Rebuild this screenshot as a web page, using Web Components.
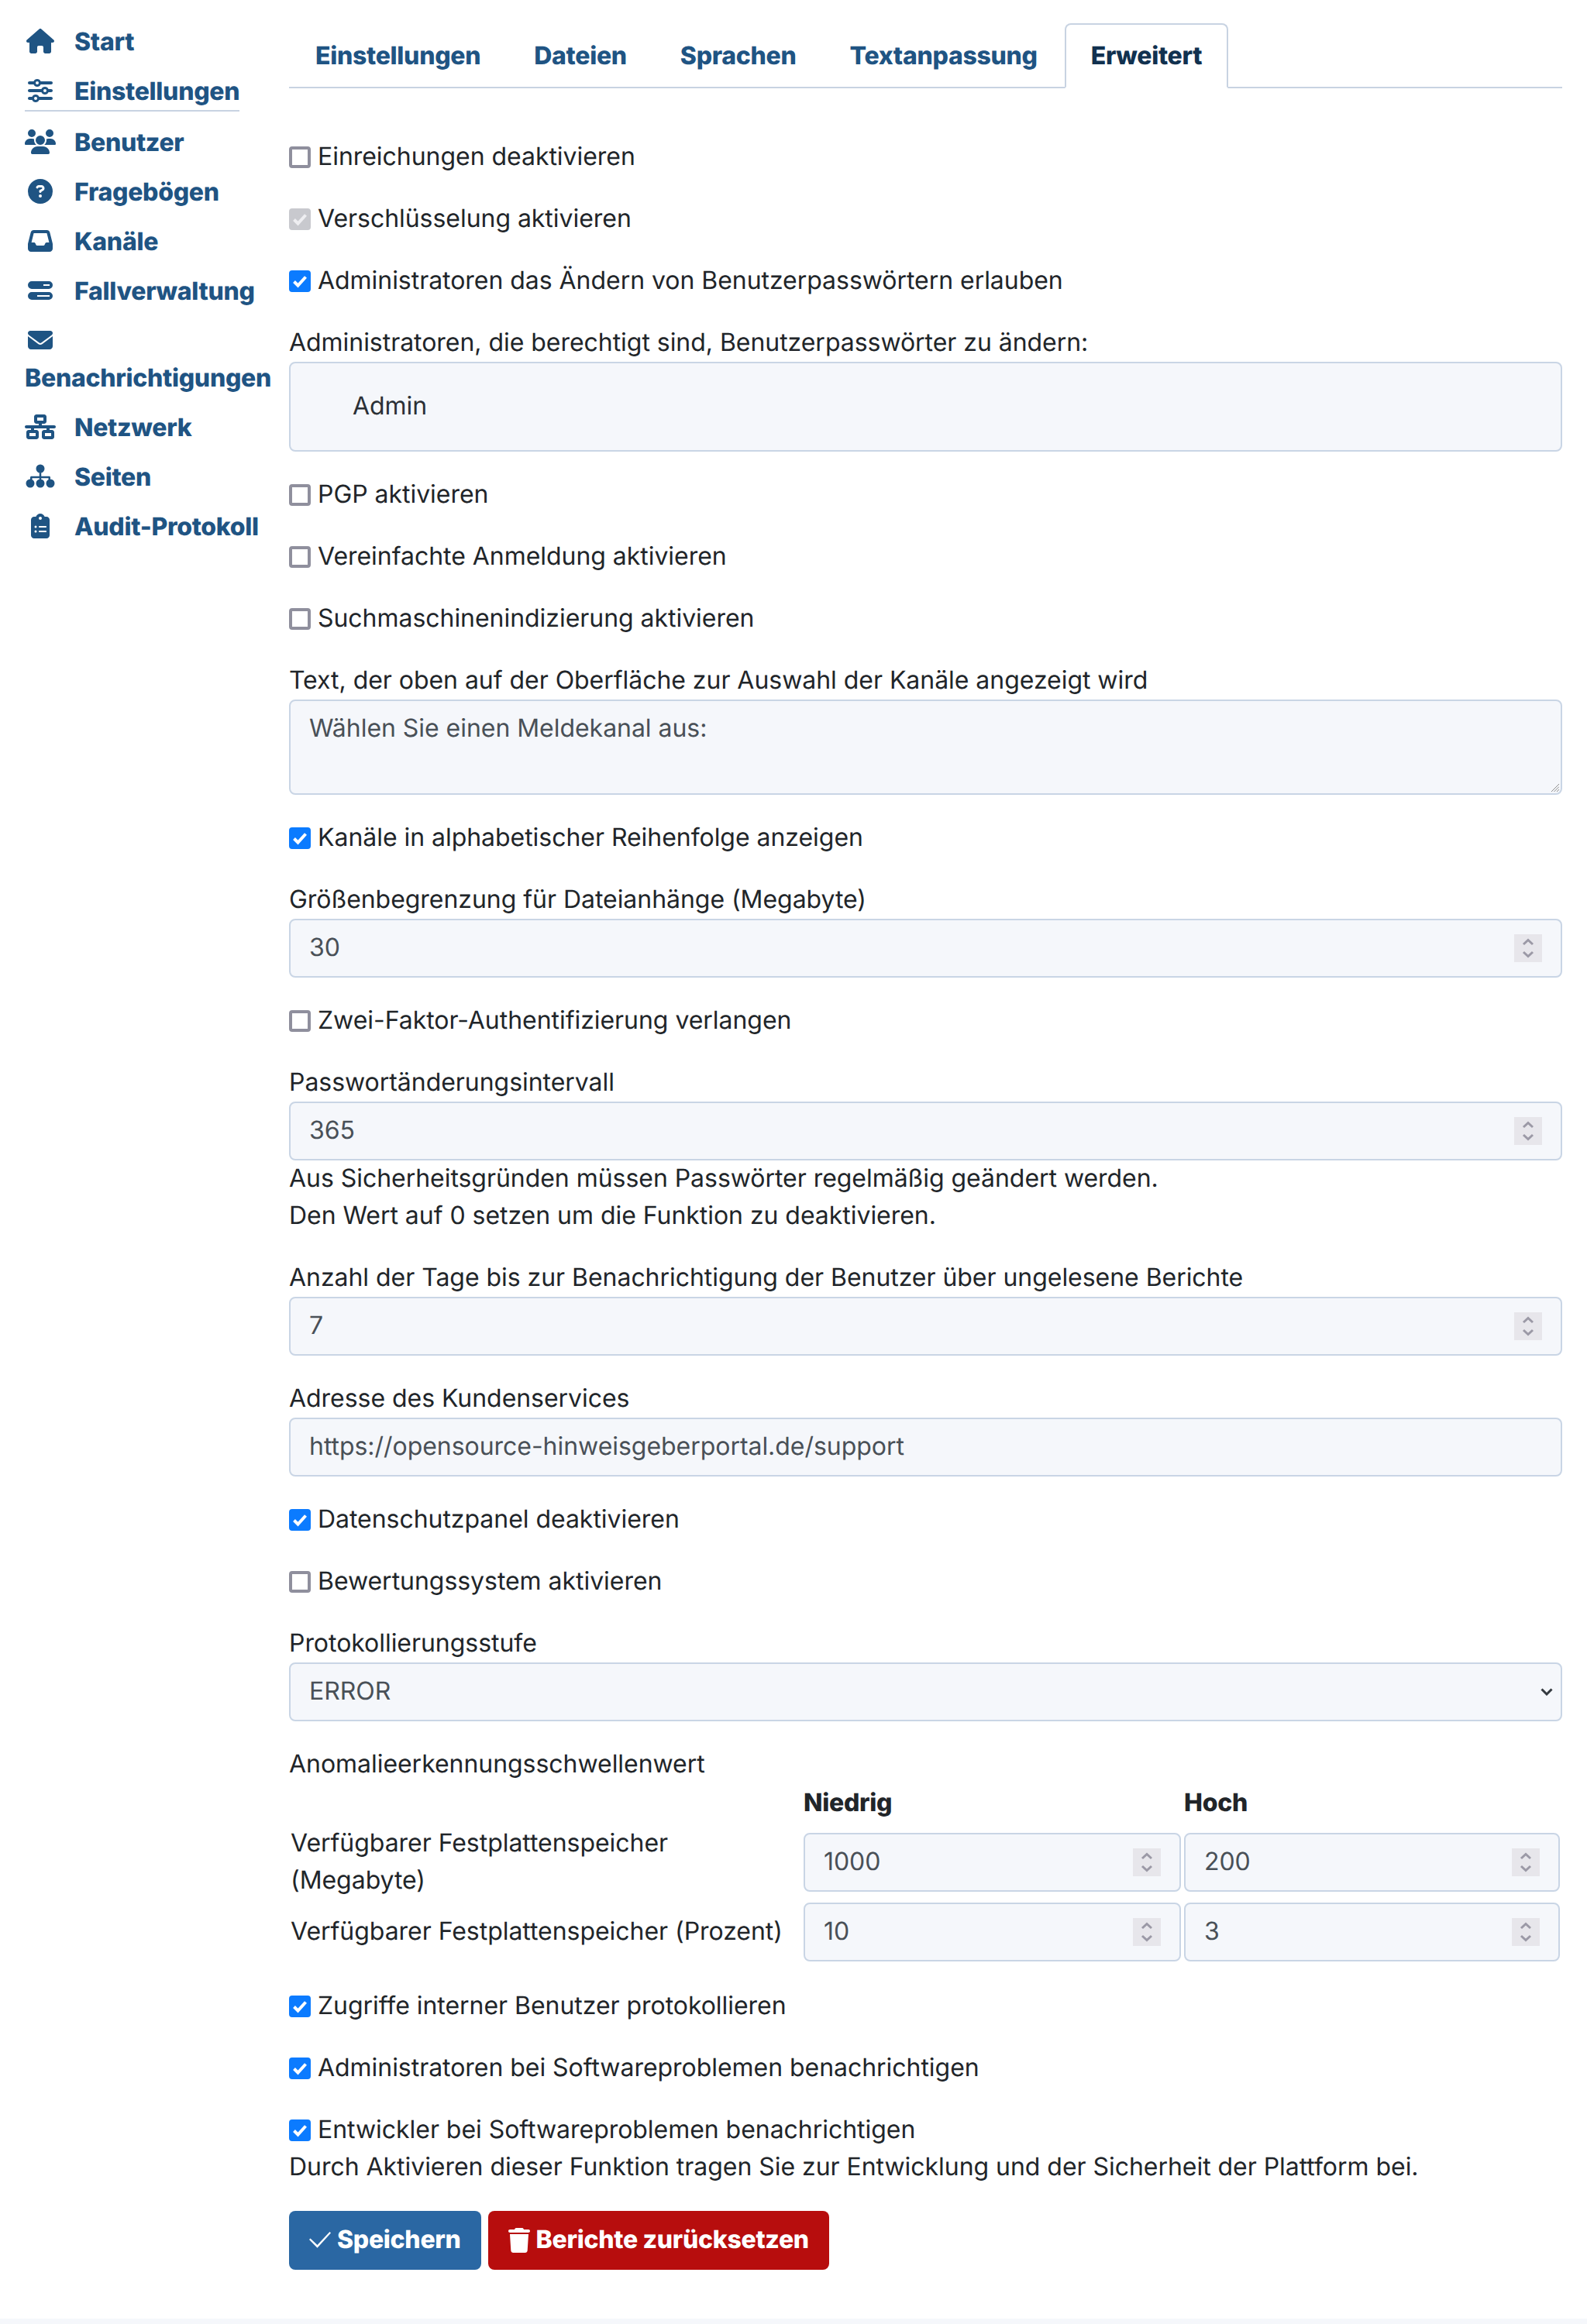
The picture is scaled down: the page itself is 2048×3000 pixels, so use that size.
<!DOCTYPE html>
<html lang="de">
<head>
<meta charset="utf-8">
<title>Erweitert</title>
<style>
  html, body { margin: 0; padding: 0; background: #fff; }
  body { font-family: Inter, "Liberation Sans", sans-serif; font-size: 32px; line-height: 48px; color: #212529; text-rendering: geometricPrecision; letter-spacing: -0.04px; }
</style>
</head>
<body>

<admin-page>
  <side-nav slot="nav">
    <nav-item icon="house">Start</nav-item>
    <nav-item icon="sliders" active>Einstellungen</nav-item>
    <nav-item icon="users">Benutzer</nav-item>
    <nav-item icon="question">Fragebögen</nav-item>
    <nav-item icon="inbox">Kanäle</nav-item>
    <nav-item icon="server">Fallverwaltung</nav-item>
    <nav-item icon="envelope">Benachrichtigungen</nav-item>
    <nav-item icon="network">Netzwerk</nav-item>
    <nav-item icon="sitemap">Seiten</nav-item>
    <nav-item icon="clipboard">Audit-Protokoll</nav-item>
  </side-nav>

  <tab-bar>
    <tab-item>Einstellungen</tab-item>
    <tab-item>Dateien</tab-item>
    <tab-item>Sprachen</tab-item>
    <tab-item>Textanpassung</tab-item>
    <tab-item active>Erweitert</tab-item>
  </tab-bar>

  <settings-form>
    <check-row>Einreichungen deaktivieren</check-row>
    <check-row checked disabled>Verschlüsselung aktivieren</check-row>
    <check-row checked>Administratoren das Ändern von Benutzerpasswörtern erlauben</check-row>

    <setting-field label="Administratoren, die berechtigt sind, Benutzerpasswörter zu ändern:">
      <input-box kind="multi">Admin</input-box>
    </setting-field>

    <check-row>PGP aktivieren</check-row>
    <check-row>Vereinfachte Anmeldung aktivieren</check-row>
    <check-row>Suchmaschinenindizierung aktivieren</check-row>

    <setting-field label="Text, der oben auf der Oberfläche zur Auswahl der Kanäle angezeigt wird">
      <input-box kind="textarea">Wählen Sie einen Meldekanal aus:</input-box>
    </setting-field>

    <check-row checked>Kanäle in alphabetischer Reihenfolge anzeigen</check-row>

    <setting-field label="Größenbegrenzung für Dateianhänge (Megabyte)">
      <input-box kind="number">30</input-box>
    </setting-field>

    <check-row>Zwei-Faktor-Authentifizierung verlangen</check-row>

    <setting-field label="Passwortänderungsintervall">
      <input-box kind="number">365</input-box>
      <div slot="help">Aus Sicherheitsgründen müssen Passwörter regelmäßig geändert werden.</div>
      <div slot="help">Den Wert auf 0 setzen um die Funktion zu deaktivieren.</div>
    </setting-field>

    <setting-field label="Anzahl der Tage bis zur Benachrichtigung der Benutzer über ungelesene Berichte">
      <input-box kind="number">7</input-box>
    </setting-field>

    <setting-field label="Adresse des Kundenservices">
      <input-box>https://opensource-hinweisgeberportal.de/support</input-box>
    </setting-field>

    <check-row checked>Datenschutzpanel deaktivieren</check-row>
    <check-row>Bewertungssystem aktivieren</check-row>

    <setting-field label="Protokollierungsstufe">
      <input-box kind="select">ERROR</input-box>
    </setting-field>

    <threshold-table>
      <span slot="title">Anomalieerkennungsschwellenwert</span>
      <span slot="low">Niedrig</span>
      <span slot="high">Hoch</span>
      <span slot="row1">Verfügbarer Festplattenspeicher (Megabyte)</span>
      <input-box slot="row1-low" kind="number">1000</input-box>
      <input-box slot="row1-high" kind="number">200</input-box>
      <span slot="row2">Verfügbarer Festplattenspeicher (Prozent)</span>
      <input-box slot="row2-low" kind="number">10</input-box>
      <input-box slot="row2-high" kind="number">3</input-box>
    </threshold-table>

    <check-row checked>Zugriffe interner Benutzer protokollieren</check-row>
    <check-row checked>Administratoren bei Softwareproblemen benachrichtigen</check-row>
    <check-row checked>
      Entwickler bei Softwareproblemen benachrichtigen
      <div slot="help">Durch Aktivieren dieser Funktion tragen Sie zur Entwicklung und der Sicherheit der Plattform bei.</div>
    </check-row>

    <button-row>
      <action-button icon="check">Speichern</action-button>
      <action-button icon="trash" danger>Berichte zurücksetzen</action-button>
    </button-row>
  </settings-form>

  <page-footer slot="footer"></page-footer>
</admin-page>

<script>
// Icon shapes, viewBox then path
const ICONS = {
  house: ['0 0 576 512', 'M575.8 255.5c0 18-15 32.1-32 32.1h-32l.7 160.2c0 2.7-.2 5.4-.5 8.1V472c0 22.1-17.9 40-40 40H456c-1.1 0-2.2 0-3.3-.1c-1.4 .1-2.8 .1-4.2 .1H416 392c-22.1 0-40-17.9-40-40V448 384c0-17.7-14.3-32-32-32H256c-17.7 0-32 14.3-32 32v64 24c0 22.1-17.9 40-40 40H160 128.1c-1.5 0-3-.1-4.5-.2c-1.2 .1-2.4 .2-3.6 .2H104c-22.1 0-40-17.9-40-40V360c0-.9 0-1.9 .1-2.8V287.6H32c-18 0-32-14-32-32.1c0-9 3-17 10-24L266.4 8c7-7 15-8 22-8s15 2 21 7L564.8 231.5c8 7 12 15 11 24z'],
  sliders: ['0 0 512 512', 'M0 416c0 17.7 14.3 32 32 32l54.7 0c12.3 28.3 40.5 48 73.3 48s61-19.7 73.3-48L480 448c17.7 0 32-14.3 32-32s-14.3-32-32-32l-246.7 0c-12.3-28.3-40.5-48-73.3-48s-61 19.7-73.3 48L32 384c-17.7 0-32 14.3-32 32zm128 0a32 32 0 1 1 64 0 32 32 0 1 1 -64 0zM320 256a32 32 0 1 1 64 0 32 32 0 1 1 -64 0zm32-80c-32.8 0-61 19.7-73.3 48L32 224c-17.7 0-32 14.3-32 32s14.3 32 32 32l246.7 0c12.3 28.3 40.5 48 73.3 48s61-19.7 73.3-48l54.7 0c17.7 0 32-14.3 32-32s-14.3-32-32-32l-54.7 0c-12.3-28.3-40.5-48-73.3-48zM192 128a32 32 0 1 1 0-64 32 32 0 1 1 0 64zm73.3-64C253 35.7 224.8 16 192 16s-61 19.7-73.3 48L32 64C14.3 64 0 78.3 0 96s14.3 32 32 32l86.7 0c12.3 28.3 40.5 48 73.3 48s61-19.7 73.3-48L480 128c17.7 0 32-14.3 32-32s-14.3-32-32-32L265.3 64z'],
  users: ['0 0 640 512', 'M144 0a80 80 0 1 1 0 160A80 80 0 1 1 144 0zM512 0a80 80 0 1 1 0 160A80 80 0 1 1 512 0zM0 298.7C0 239.8 47.8 192 106.7 192h42.7c15.9 0 31 3.5 44.6 9.7c-1.3 7.2-1.9 14.7-1.9 22.3c0 38.2 16.8 72.5 43.3 96c-.2 0-.4 0-.7 0H21.3C9.6 320 0 310.4 0 298.7zM405.3 320c-.2 0-.4 0-.7 0c26.6-23.5 43.3-57.8 43.3-96c0-7.6-.7-15-1.9-22.3c13.6-6.3 28.7-9.7 44.6-9.7h42.7C592.2 192 640 239.8 640 298.7c0 11.8-9.6 21.3-21.3 21.3H405.3zM224 224a96 96 0 1 1 192 0 96 96 0 1 1 -192 0zM128 485.3C128 411.7 187.7 352 261.3 352H378.7C452.3 352 512 411.7 512 485.3c0 14.7-11.9 26.7-26.7 26.7H154.7c-14.7 0-26.7-11.9-26.7-26.7z'],
  question: ['0 0 512 512', 'M256 512A256 256 0 1 0 256 0a256 256 0 1 0 0 512zM169.8 165.3c7.9-22.3 29.1-37.3 52.8-37.3h58.3c34.9 0 63.1 28.3 63.1 63.1c0 22.6-12.1 43.5-31.7 54.8L280 264.4c-.2 13-10.9 23.6-24 23.6c-13.3 0-24-10.7-24-24V250.5c0-8.6 4.6-16.5 12.1-20.8l44.3-25.4c4.7-2.7 7.6-7.7 7.6-13.1c0-8.4-6.8-15.1-15.1-15.1H222.6c-3.4 0-6.4 2.1-7.5 5.3l-.4 1.2c-4.4 12.5-18.2 19-30.6 14.6s-19-18.2-14.6-30.6l.4-1.2zM224 352a32 32 0 1 1 64 0 32 32 0 1 1 -64 0z'],
  inbox: ['0 0 512 512', 'M121 32C91.6 32 66 52 58.9 80.5L1.9 308.4C.6 313.5 0 318.7 0 323.9V416c0 35.3 28.7 64 64 64H448c35.3 0 64-28.7 64-64V323.9c0-5.2-.6-10.4-1.9-15.5l-57-227.9C446 52 420.4 32 391 32H121zm0 64H391l48 192H387.8c-12.1 0-23.2 6.8-28.6 17.7l-14.3 28.6c-5.4 10.8-16.5 17.7-28.6 17.7H195.8c-12.1 0-23.2-6.8-28.6-17.7l-14.3-28.6c-5.4-10.8-16.5-17.7-28.6-17.7H73L121 96z'],
  server: ['0 0 512 512', 'M80 64H432a80 80 0 0 1 0 160H80a80 80 0 0 1 0-160zM320 128v32H448V128zM80 288H432a80 80 0 0 1 0 160H80a80 80 0 0 1 0-160zM192 352v32H448V352z'],
  envelope: ['0 0 512 512', 'M48 64C21.5 64 0 85.5 0 112c0 15.1 7.1 29.3 19.2 38.4L236.8 313.6c11.4 8.5 27 8.5 38.4 0L492.8 150.4c12.1-9.1 19.2-23.3 19.2-38.4c0-26.5-21.5-48-48-48H48zM0 176V384c0 35.3 28.7 64 64 64H448c35.3 0 64-28.7 64-64V176L294.4 339.2c-22.8 17.1-54 17.1-76.8 0L0 176z'],
  network: ['0 0 640 512', 'M256 64H384v64H256V64zM240 0c-26.5 0-48 21.5-48 48v96c0 26.5 21.5 48 48 48h48v32H32c-17.7 0-32 14.3-32 32s14.3 32 32 32h96v32H80c-26.5 0-48 21.5-48 48v96c0 26.5 21.5 48 48 48H240c26.5 0 48-21.5 48-48V368c0-26.5-21.5-48-48-48H192V288H448v32H400c-26.5 0-48 21.5-48 48v96c0 26.5 21.5 48 48 48H560c26.5 0 48-21.5 48-48V368c0-26.5-21.5-48-48-48H512V288h96c17.7 0 32-14.3 32-32s-14.3-32-32-32H352V192h48c26.5 0 48-21.5 48-48V48c0-26.5-21.5-48-48-48H240zM96 448V384H224v64H96zm320-64H544v64H416V384z'],
  sitemap: ['0 0 576 512', 'M288 8a88 88 0 1 1 0 176a88 88 0 1 1 0-176zM268 170h40v80H470c16 0 26 10 26 26v50h-40V290H308v40h-40V290H120v40H80V276c0-16 10-26 26-26H268zM80 312a88 88 0 1 1 0 176a88 88 0 1 1 0-176zM288 312a88 88 0 1 1 0 176a88 88 0 1 1 0-176zM496 312a88 88 0 1 1 0 176a88 88 0 1 1 0-176z'],
  clipboard: ['0 0 384 512', 'M192 0c-41.8 0-77.4 26.7-90.5 64H64C28.7 64 0 92.7 0 128V448c0 35.3 28.7 64 64 64H320c35.3 0 64-28.7 64-64V128c0-35.3-28.7-64-64-64H282.5C269.4 26.7 233.8 0 192 0zm0 64a32 32 0 1 1 0 64 32 32 0 1 1 0-64zM72 272a24 24 0 1 1 48 0 24 24 0 1 1 -48 0zm104-16H304c8.8 0 16 7.2 16 16s-7.2 16-16 16H176c-8.8 0-16-7.2-16-16s7.2-16 16-16zM72 368a24 24 0 1 1 48 0 24 24 0 1 1 -48 0zm88 0c0-8.8 7.2-16 16-16H304c8.8 0 16 7.2 16 16s-7.2 16-16 16H176c-8.8 0-16-7.2-16-16z'],
  trash: ['0 0 448 512', 'M135.2 17.7L128 32H32C14.3 32 0 46.3 0 64S14.3 96 32 96H416c17.7 0 32-14.3 32-32s-14.3-32-32-32H320l-7.2-14.3C307.4 6.8 296.3 0 284.2 0H163.8c-12.1 0-23.2 6.8-28.6 17.7zM416 128H32L53.2 467c1.6 25.3 22.6 45 47.9 45H346.9c25.3 0 46.3-19.7 47.9-45L416 128z'],
  check: ['0 0 448 512', 'M0 240L24 216L168 350L424 80L448 104L168 410z']
};

// Single icon, 32px high and centred in a 40px wide box
class FaIcon extends HTMLElement {
  constructor() {
    super();
    const [box, d] = ICONS[this.getAttribute('name')];
    this.attachShadow({ mode: 'open' });
    this.shadowRoot.innerHTML = `
      <style>
        :host { display: inline-block; width: 40px; height: 32px; vertical-align: -4px; }
        svg { display: block; width: 100%; height: 100%; fill: currentColor; }
      </style>
      <svg viewBox="${box}" aria-hidden="true"><path d="${d}"/></svg>`;
  }
}

// Page frame: sidebar, content column, footer
const adminPageTemplate = document.createElement('template');
adminPageTemplate.innerHTML = `
  <style>
    :host { display: block; }
    .columns { display: grid; grid-template-columns: 373px 1643px; padding-right: 32px; }
    main { min-width: 0; }
  </style>
  <div class="columns">
    <slot name="nav"></slot>
    <main><slot></slot></main>
  </div>
  <slot name="footer"></slot>
`;
class AdminPage extends HTMLElement {
  constructor() {
    super();
    this.attachShadow({ mode: 'open' });
    this.shadowRoot.appendChild(adminPageTemplate.content.cloneNode(true));
  }
}

const sideNavTemplate = document.createElement('template');
sideNavTemplate.innerHTML = `
  <style>
    :host { display: block; padding: 22px 8px 0 32px; }
  </style>
  <nav><slot></slot></nav>
`;
class SideNav extends HTMLElement {
  constructor() {
    super();
    this.attachShadow({ mode: 'open' });
    this.shadowRoot.appendChild(sideNavTemplate.content.cloneNode(true));
  }
}

class NavItem extends HTMLElement {
  constructor() {
    super();
    this.attachShadow({ mode: 'open' });
    this.shadowRoot.innerHTML = `
      <style>
        :host { display: block; padding: 8px 0; color: #1f5483; font-weight: 800; letter-spacing: -0.3px; line-height: 48px; }
        a { display: inline-block; color: inherit; text-decoration: none; }
        :host([active]) a { border-bottom: 2px solid #c8d3e2; }
        fa-icon { margin-right: 24px; }
      </style>
      <a href="#"><fa-icon name="${this.getAttribute('icon')}"></fa-icon><slot></slot></a>`;
  }
}

const tabBarTemplate = document.createElement('template');
tabBarTemplate.innerHTML = `
  <style>
    :host { display: flex; padding-top: 30px; border-bottom: 2px solid #c8d3e2; height: 82px; }
  </style>
  <slot></slot>
`;
class TabBar extends HTMLElement {
  constructor() {
    super();
    this.attachShadow({ mode: 'open' });
    this.shadowRoot.appendChild(tabBarTemplate.content.cloneNode(true));
  }
}

const tabItemTemplate = document.createElement('template');
tabItemTemplate.innerHTML = `
  <style>
    :host {
      display: block; height: 84px; box-sizing: border-box; padding: 16px 32px; margin-right: 1px;
      border: 2px solid transparent; border-radius: 8px 8px 0 0;
      color: #1f5483; font-weight: 800; letter-spacing: -0.3px; line-height: 48px; white-space: nowrap; background: transparent;
    }
    :host([active]) { color: #11314f; background: #fff; border-color: #c8d3e2 #c8d3e2 #fff; }
  </style>
  <slot></slot>
`;
class TabItem extends HTMLElement {
  constructor() {
    super();
    this.attachShadow({ mode: 'open' });
    this.shadowRoot.appendChild(tabItemTemplate.content.cloneNode(true));
  }
}

const settingsFormTemplate = document.createElement('template');
settingsFormTemplate.innerHTML = `
  <style>
    :host { display: block; padding-top: 65px; }
  </style>
  <slot></slot>
`;
class SettingsForm extends HTMLElement {
  constructor() {
    super();
    this.attachShadow({ mode: 'open' });
    this.shadowRoot.appendChild(settingsFormTemplate.content.cloneNode(true));
  }
}

// The 46px line + 2px padding on single lines sets the baseline 1px higher, as in the reference
const checkRowTemplate = document.createElement('template');
checkRowTemplate.innerHTML = `
  <style>
    :host { display: block; margin-bottom: 32px; }
    .line { display: flex; align-items: center; gap: 9px; }
    .box {
      flex: none; width: 28px; height: 28px; box-sizing: border-box; border-radius: 4px;
      border: 4px solid #8f8f9d; background: #fff;
    }
    .box svg { display: none; width: 28px; height: 28px; margin: -4px; fill: none; stroke: #fff; stroke-width: 4px; }
    :host([checked]) .box { background: #0b7bff; border-color: #0b7bff; }
    :host([checked]) .box svg { display: block; }
    :host([disabled]) .box { background: #c8c9ce; border-color: #c8c9ce; }
    :host([disabled]) .box svg { stroke: #eeeef1; }
    .text { line-height: 46px; padding-bottom: 2px; }
    ::slotted([slot="help"]) { line-height: 46px; padding-bottom: 2px; }
  </style>
  <div class="line">
    <span class="box"><svg viewBox="0 0 28 28"><polyline points="6.5,14.5 11.5,19.5 21.5,8.5"/></svg></span>
    <span class="text"><slot></slot></span>
  </div>
  <slot name="help"></slot>
`;
class CheckRow extends HTMLElement {
  constructor() {
    super();
    this.attachShadow({ mode: 'open' });
    this.shadowRoot.appendChild(checkRowTemplate.content.cloneNode(true));
  }
}

class SettingField extends HTMLElement {
  constructor() {
    super();
    this.attachShadow({ mode: 'open' });
    this.shadowRoot.innerHTML = `
      <style>
        :host { display: block; margin-bottom: 32px; }
        label { display: block; line-height: 46px; padding-bottom: 2px; }
        ::slotted([slot="help"]) { line-height: 46px; padding-bottom: 2px; }
      </style>
      <label></label>
      <slot></slot>
      <slot name="help"></slot>`;
    this.shadowRoot.querySelector('label').innerText = this.getAttribute('label');
  }
}

// Text field look, kind = number, select, multi, textarea or nothing
class InputBox extends HTMLElement {
  constructor() {
    super();
    this.attachShadow({ mode: 'open' });
    const kind = this.getAttribute('kind');
    let end = '';
    if (kind === 'number') {
      end = `<svg class="spin" viewBox="0 0 36 36"><polyline points="12,13 18,7.5 24,13"/><polyline points="12,23 18,28.5 24,23"/></svg>`;
    } else if (kind === 'select') {
      end = `<svg class="caret" viewBox="0 0 16 10"><polyline points="1.5,1.5 8,8 14.5,1.5"/></svg>`;
    } else if (kind === 'textarea') {
      end = `<svg class="grip" viewBox="0 0 10 10"><path d="M0 10L10 0M3.5 10L10 3.5M7 10L10 7"/></svg>`;
    }
    this.shadowRoot.innerHTML = `
      <style>
        :host {
          display: flex; align-items: center; position: relative; box-sizing: border-box;
          height: 76px; padding: 12px 24px; border: 2px solid #c9d5e5; border-radius: 8px;
          background: #f5f7fb; color: #495057; white-space: nowrap;
        }
        :host([kind="multi"]) { height: 116px; padding-left: 80px; color: #2b3036; }
        :host([kind="textarea"]) { height: 123px; align-items: flex-start; }
        :host([kind="select"]) { padding-right: 10px; }
        .value { flex: 1; min-width: 0; line-height: 46px; padding-bottom: 2px; }
        .spin { flex: none; width: 36px; height: 36px; background: #e7e6eb; fill: none; stroke: #9b99a6; stroke-width: 3px; }
        .caret { flex: none; width: 16px; height: 10px; fill: none; stroke: #343a40; stroke-width: 3px; }
        .grip { position: absolute; right: 2px; bottom: 2px; width: 10px; height: 10px; fill: none; stroke: #8e8e8e; stroke-width: 1px; }
      </style>
      <span class="value"><slot></slot></span>${end}`;
  }
}

const thresholdTableTemplate = document.createElement('template');
thresholdTableTemplate.innerHTML = `
  <style>
    :host { display: block; margin-bottom: 34px; }
    .title { margin-bottom: 2px; line-height: 46px; padding-bottom: 2px; }
    .grid {
      display: grid; grid-template-columns: 664px 487px 489px; grid-template-rows: 48px 104px 76px;
      align-items: center;
    }
    .head { font-weight: 800; letter-spacing: -0.3px; line-height: 46px; padding-bottom: 2px; }
    .name { padding: 0 4px 2px 2px; }
    .high { margin-left: 4px; }
  </style>
  <div class="title"><slot name="title"></slot></div>
  <div class="grid">
    <div></div>
    <div class="head"><slot name="low"></slot></div>
    <div class="head high"><slot name="high"></slot></div>
    <div class="name"><slot name="row1"></slot></div>
    <div><slot name="row1-low"></slot></div>
    <div class="high"><slot name="row1-high"></slot></div>
    <div class="name"><slot name="row2"></slot></div>
    <div><slot name="row2-low"></slot></div>
    <div class="high"><slot name="row2-high"></slot></div>
  </div>
`;
class ThresholdTable extends HTMLElement {
  constructor() {
    super();
    this.attachShadow({ mode: 'open' });
    this.shadowRoot.appendChild(thresholdTableTemplate.content.cloneNode(true));
  }
}

const buttonRowTemplate = document.createElement('template');
buttonRowTemplate.innerHTML = `
  <style>
    :host { display: flex; gap: 9px; }
  </style>
  <slot></slot>
`;
class ButtonRow extends HTMLElement {
  constructor() {
    super();
    this.attachShadow({ mode: 'open' });
    this.shadowRoot.appendChild(buttonRowTemplate.content.cloneNode(true));
  }
}

class ActionButton extends HTMLElement {
  constructor() {
    super();
    this.attachShadow({ mode: 'open' });
    this.shadowRoot.innerHTML = `
      <style>
        :host {
          display: inline-flex; align-items: center; gap: 8px; box-sizing: border-box; height: 76px;
          padding: 0 26px 2px; border-radius: 8px; background: #2a67a3; color: #fff;
          font-weight: 800; letter-spacing: -0.3px; white-space: nowrap;
        }
        :host([danger]) { background: #b70d0d; }
        fa-icon { width: 28px; margin-top: 2px; }
      </style>
      <fa-icon name="${this.getAttribute('icon')}"></fa-icon><slot></slot>`;
  }
}

const pageFooterTemplate = document.createElement('template');
pageFooterTemplate.innerHTML = `
  <style>
    :host { display: block; height: 7px; margin-top: 63px; background: #f5f7fb; }
  </style>
`;
class PageFooter extends HTMLElement {
  constructor() {
    super();
    this.attachShadow({ mode: 'open' });
    this.shadowRoot.appendChild(pageFooterTemplate.content.cloneNode(true));
  }
}

customElements.define('fa-icon', FaIcon);
customElements.define('admin-page', AdminPage);
customElements.define('side-nav', SideNav);
customElements.define('nav-item', NavItem);
customElements.define('tab-bar', TabBar);
customElements.define('tab-item', TabItem);
customElements.define('settings-form', SettingsForm);
customElements.define('check-row', CheckRow);
customElements.define('setting-field', SettingField);
customElements.define('input-box', InputBox);
customElements.define('threshold-table', ThresholdTable);
customElements.define('button-row', ButtonRow);
customElements.define('action-button', ActionButton);
customElements.define('page-footer', PageFooter);
</script>
</body>
</html>
